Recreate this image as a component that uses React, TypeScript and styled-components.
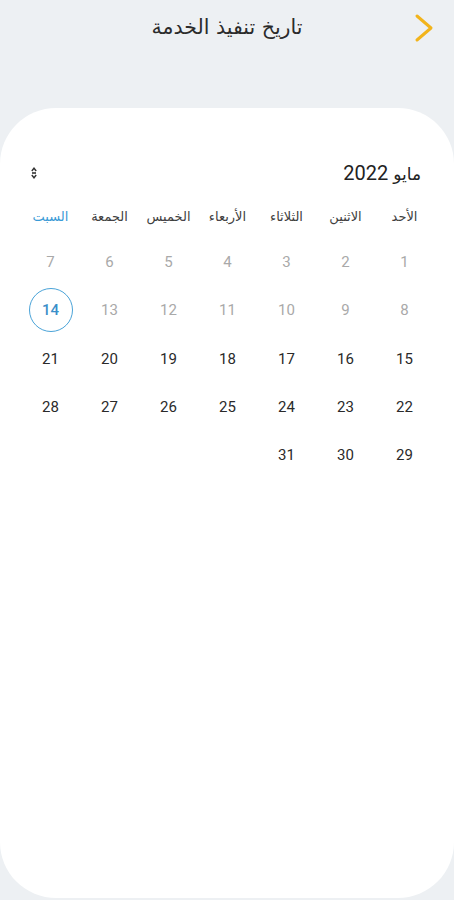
import styled, { createGlobalStyle } from "styled-components";

const GlobalStyle = createGlobalStyle`
  html, body {
    margin: 0;
    padding: 0;
    background: #edf0f3;
  }
  body {
    font-family: Roboto, "DejaVu Sans", sans-serif;
  }
`;

const Page = styled.div`
  direction: rtl;
  width: 454px;
  height: 900px;
  display: flex;
  flex-direction: column;
  background: #edf0f3;
  box-sizing: border-box;
  padding-bottom: 2px;
`;

const Header = styled.header`
  height: 56px;
  display: flex;
  align-items: center;
  justify-content: center;
  position: relative;
`;

const BackButton = styled.button`
  position: absolute;
  right: 17px;
  top: 12px;
  width: 26px;
  height: 32px;
  border: none;
  background: none;
  padding: 0;
  display: flex;
  align-items: center;
  justify-content: center;
`;

const Title = styled.h1`
  margin: 0 0 2px 0;
  font-family: "DejaVu Sans", sans-serif;
  font-size: 20.5px;
  font-weight: 400;
  color: #2b2b2b;
`;

const Card = styled.main`
  margin-top: 52px;
  flex: 1;
  background: #ffffff;
  border-radius: 56px;
  padding: 52px 20px 0 20px;
  box-sizing: border-box;
`;

const MonthRow = styled.div`
  display: flex;
  align-items: center;
  justify-content: space-between;
  padding: 0 13px 0 10px;
  height: 26px;
`;

const MonthLabel = styled.div`
  font-family: Roboto, "DejaVu Sans", sans-serif;
  font-size: 20px;
  color: #222;
`;

const MonthName = styled.span`
  font-family: "DejaVu Sans", sans-serif;
  font-size: 17px;
`;

const Toggle = styled.span`
  display: flex;
  width: 8px;
  justify-content: center;
`;

const Grid = styled.div`
  display: grid;
  grid-template-columns: repeat(7, 59px);
  margin-top: 12px;
`;

const WeekDay = styled.div<{ $accent?: boolean }>`
  height: 36px;
  margin-bottom: 4px;
  display: flex;
  align-items: center;
  justify-content: center;
  font-family: "DejaVu Sans", sans-serif;
  font-size: 13px;
  color: ${(p) => (p.$accent ? "#3a9ad6" : "#404040")};
  white-space: nowrap;
`;

const DayCell = styled.div`
  height: 48.3px;
  display: flex;
  align-items: center;
  justify-content: center;
`;

const Day = styled.span<{ $muted?: boolean; $selected?: boolean }>`
  width: 44px;
  height: 44px;
  box-sizing: border-box;
  border-radius: 50%;
  display: flex;
  align-items: center;
  justify-content: center;
  font-family: Roboto, sans-serif;
  font-size: 15px;
  font-weight: ${(p) => (p.$selected ? 500 : 400)};
  color: ${(p) => (p.$selected ? "#3a8fc9" : p.$muted ? "#a9a9a9" : "#2a2a2a")};
  border: ${(p) => (p.$selected ? "1.5px solid #4aa3d8" : "none")};
`;

const weekDays = ["الأحد", "الاثنين", "الثلاثاء", "الأربعاء", "الخميس", "الجمعة", "السبت"];

const days: number[] = [];
for (let i = 1; i <= 31; i++) days.push(i);

export default function App() {
  return (
    <>
      <GlobalStyle />
      <Page>
        <Header>
          <BackButton aria-label="back">
            <svg width="22" height="30" viewBox="0 0 22 30">
              <path
                d="M4 3 L18 15 L4 27"
                fill="none"
                stroke="#f2b41b"
                strokeWidth="3"
                strokeLinecap="round"
                strokeLinejoin="round"
              />
            </svg>
          </BackButton>
          <Title>تاريخ تنفيذ الخدمة</Title>
        </Header>
        <Card>
          <MonthRow>
            <MonthLabel>
              <MonthName>مايو</MonthName> 2022
            </MonthLabel>
            <Toggle>
              <svg width="6" height="12" viewBox="0 0 6 12">
                <path d="M0.8 4 L3 1.2 L5.2 4" fill="none" stroke="#333" strokeWidth="1.4" />
                <path d="M0.8 8 L3 10.8 L5.2 8" fill="none" stroke="#333" strokeWidth="1.4" />
                <rect x="1" y="5.2" width="4" height="1.6" fill="#333" />
              </svg>
            </Toggle>
          </MonthRow>
          <Grid>
            {weekDays.map((d, i) => (
              <WeekDay key={d} $accent={i === 6}>
                {d}
              </WeekDay>
            ))}
            {days.map((d) => (
              <DayCell key={d}>
                <Day $muted={d < 14} $selected={d === 14}>
                  {d}
                </Day>
              </DayCell>
            ))}
          </Grid>
        </Card>
      </Page>
    </>
  );
}
